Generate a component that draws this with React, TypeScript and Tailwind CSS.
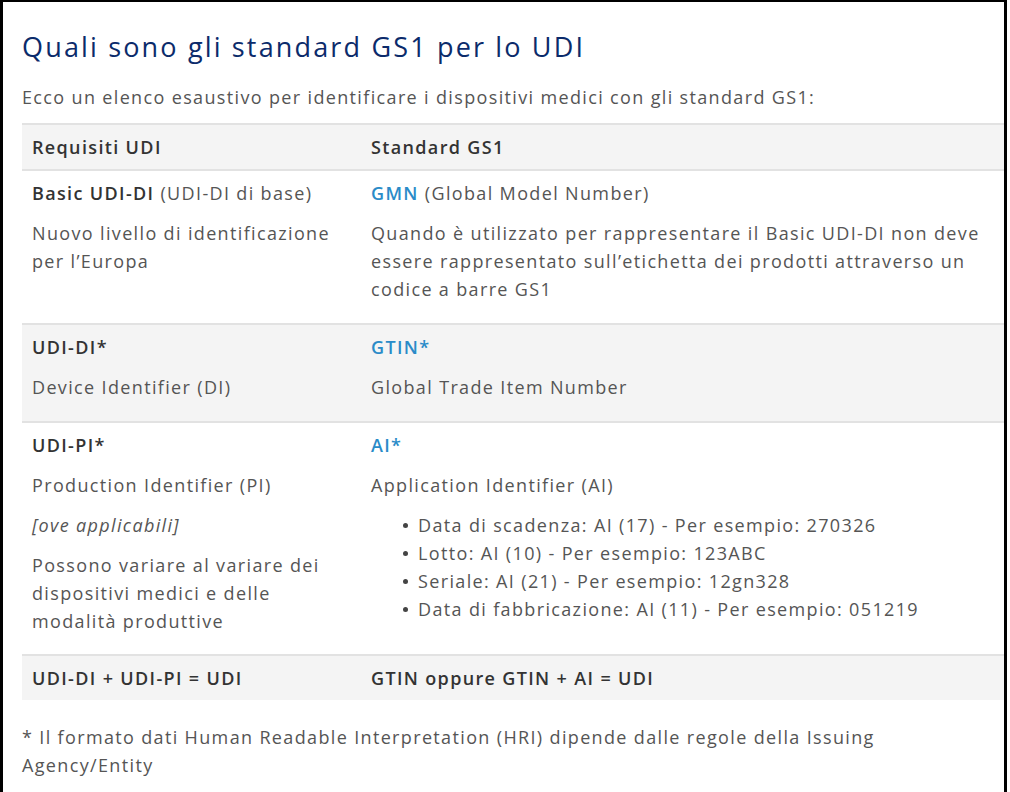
import React from "react";

const font = { fontFamily: '"Open Sans", "Noto Sans", Arial, sans-serif' };

export default function App() {
  return (
    <div
      className="w-[1007px] h-[792px] overflow-hidden border-l-[3px] border-t-2 border-r-[3px] border-black bg-white text-[18px] leading-[28px] tracking-[0.075em] text-[#555555]"
      style={font}
    >
      <div className="pl-[19px]">
        <h1 className="pt-[25px] text-[27px] leading-[40px] tracking-[0.08em] text-[#0b2b6b] font-normal">
          Quali sono gli standard GS1 per lo UDI
        </h1>
        <p className="mt-[16px]">
          Ecco un elenco esaustivo per identificare i dispositivi medici con gli standard GS1:
        </p>
        <div className="mt-3 border-t-2 border-[#e2e2e2]">
          <div className="flex bg-[#f4f4f4] border-b-2 border-[#e2e2e2] font-semibold text-[#333333]">
            <div className="w-[339px] pl-[10px] py-2">Requisiti UDI</div>
            <div className="flex-1 pl-[10px] py-2">Standard GS1</div>
          </div>

          <div className="flex bg-white border-b-2 border-[#e2e2e2]">
            <div className="w-[339px] pl-[10px] pr-3 pt-2 pb-2">
              <p className="mb-3">
                <span className="font-semibold text-[#333333]">Basic UDI-DI</span> (UDI-DI di base)
              </p>
              <p className="mb-3">Nuovo livello di identificazione per l’Europa</p>
            </div>
            <div className="flex-1 pl-[10px] pr-3 pt-2 pb-2">
              <p className="mb-3">
                <span className="font-semibold text-[#2a8bc8]">GMN</span> (Global Model Number)
              </p>
              <p className="mb-3">
                Quando è utilizzato per rappresentare il Basic UDI-DI non deve essere rappresentato sull’etichetta dei prodotti attraverso un codice a barre GS1
              </p>
            </div>
          </div>

          <div className="flex bg-[#f4f4f4] border-b-2 border-[#e2e2e2]">
            <div className="w-[339px] pl-[10px] pr-3 pt-2 pb-2">
              <p className="mb-3 font-semibold text-[#333333]">UDI-DI*</p>
              <p className="mb-3">Device Identifier (DI)</p>
            </div>
            <div className="flex-1 pl-[10px] pr-3 pt-2 pb-2">
              <p className="mb-3 font-semibold text-[#2a8bc8]">GTIN*</p>
              <p className="mb-3">Global Trade Item Number</p>
            </div>
          </div>

          <div className="flex bg-white border-b-2 border-[#e2e2e2]">
            <div className="w-[339px] pl-[10px] pr-3 pt-2 pb-[7px]">
              <p className="mb-3 font-semibold text-[#333333]">UDI-PI*</p>
              <p className="mb-3">Production Identifier (PI)</p>
              <p className="mb-3 italic">[ove applicabili]</p>
              <p className="mb-3">Possono variare al variare dei dispositivi medici e delle modalità produttive</p>
            </div>
            <div className="flex-1 pl-[10px] pr-3 pt-2 pb-2">
              <p className="mb-3 font-semibold text-[#2a8bc8]">AI*</p>
              <p className="mb-3">Application Identifier (AI)</p>
              <ul className="mb-3 pl-[32px]">
                {[
                  "Data di scadenza: AI (17) - Per esempio: 270326",
                  "Lotto: AI (10) - Per esempio: 123ABC",
                  "Seriale: AI (21) - Per esempio: 12gn328",
                  "Data di fabbricazione: AI (11) - Per esempio: 051219",
                ].map((t) => (
                  <li key={t} className="flex items-center">
                    <span className="w-[5px] h-[5px] rounded-full bg-[#444444] mr-[10px] shrink-0" />
                    <span>{t}</span>
                  </li>
                ))}
              </ul>
            </div>
          </div>

          <div className="flex bg-[#f4f4f4] font-semibold text-[#333333]">
            <div className="w-[339px] pl-[10px] py-2">UDI-DI + UDI-PI = UDI</div>
            <div className="flex-1 pl-[10px] py-2">GTIN oppure GTIN + AI = UDI</div>
          </div>
        </div>
        <p className="mt-[23px] pr-[60px]">
          * Il formato dati Human Readable Interpretation (HRI) dipende dalle regole della Issuing Agency/Entity
        </p>
      </div>
    </div>
  );
}
